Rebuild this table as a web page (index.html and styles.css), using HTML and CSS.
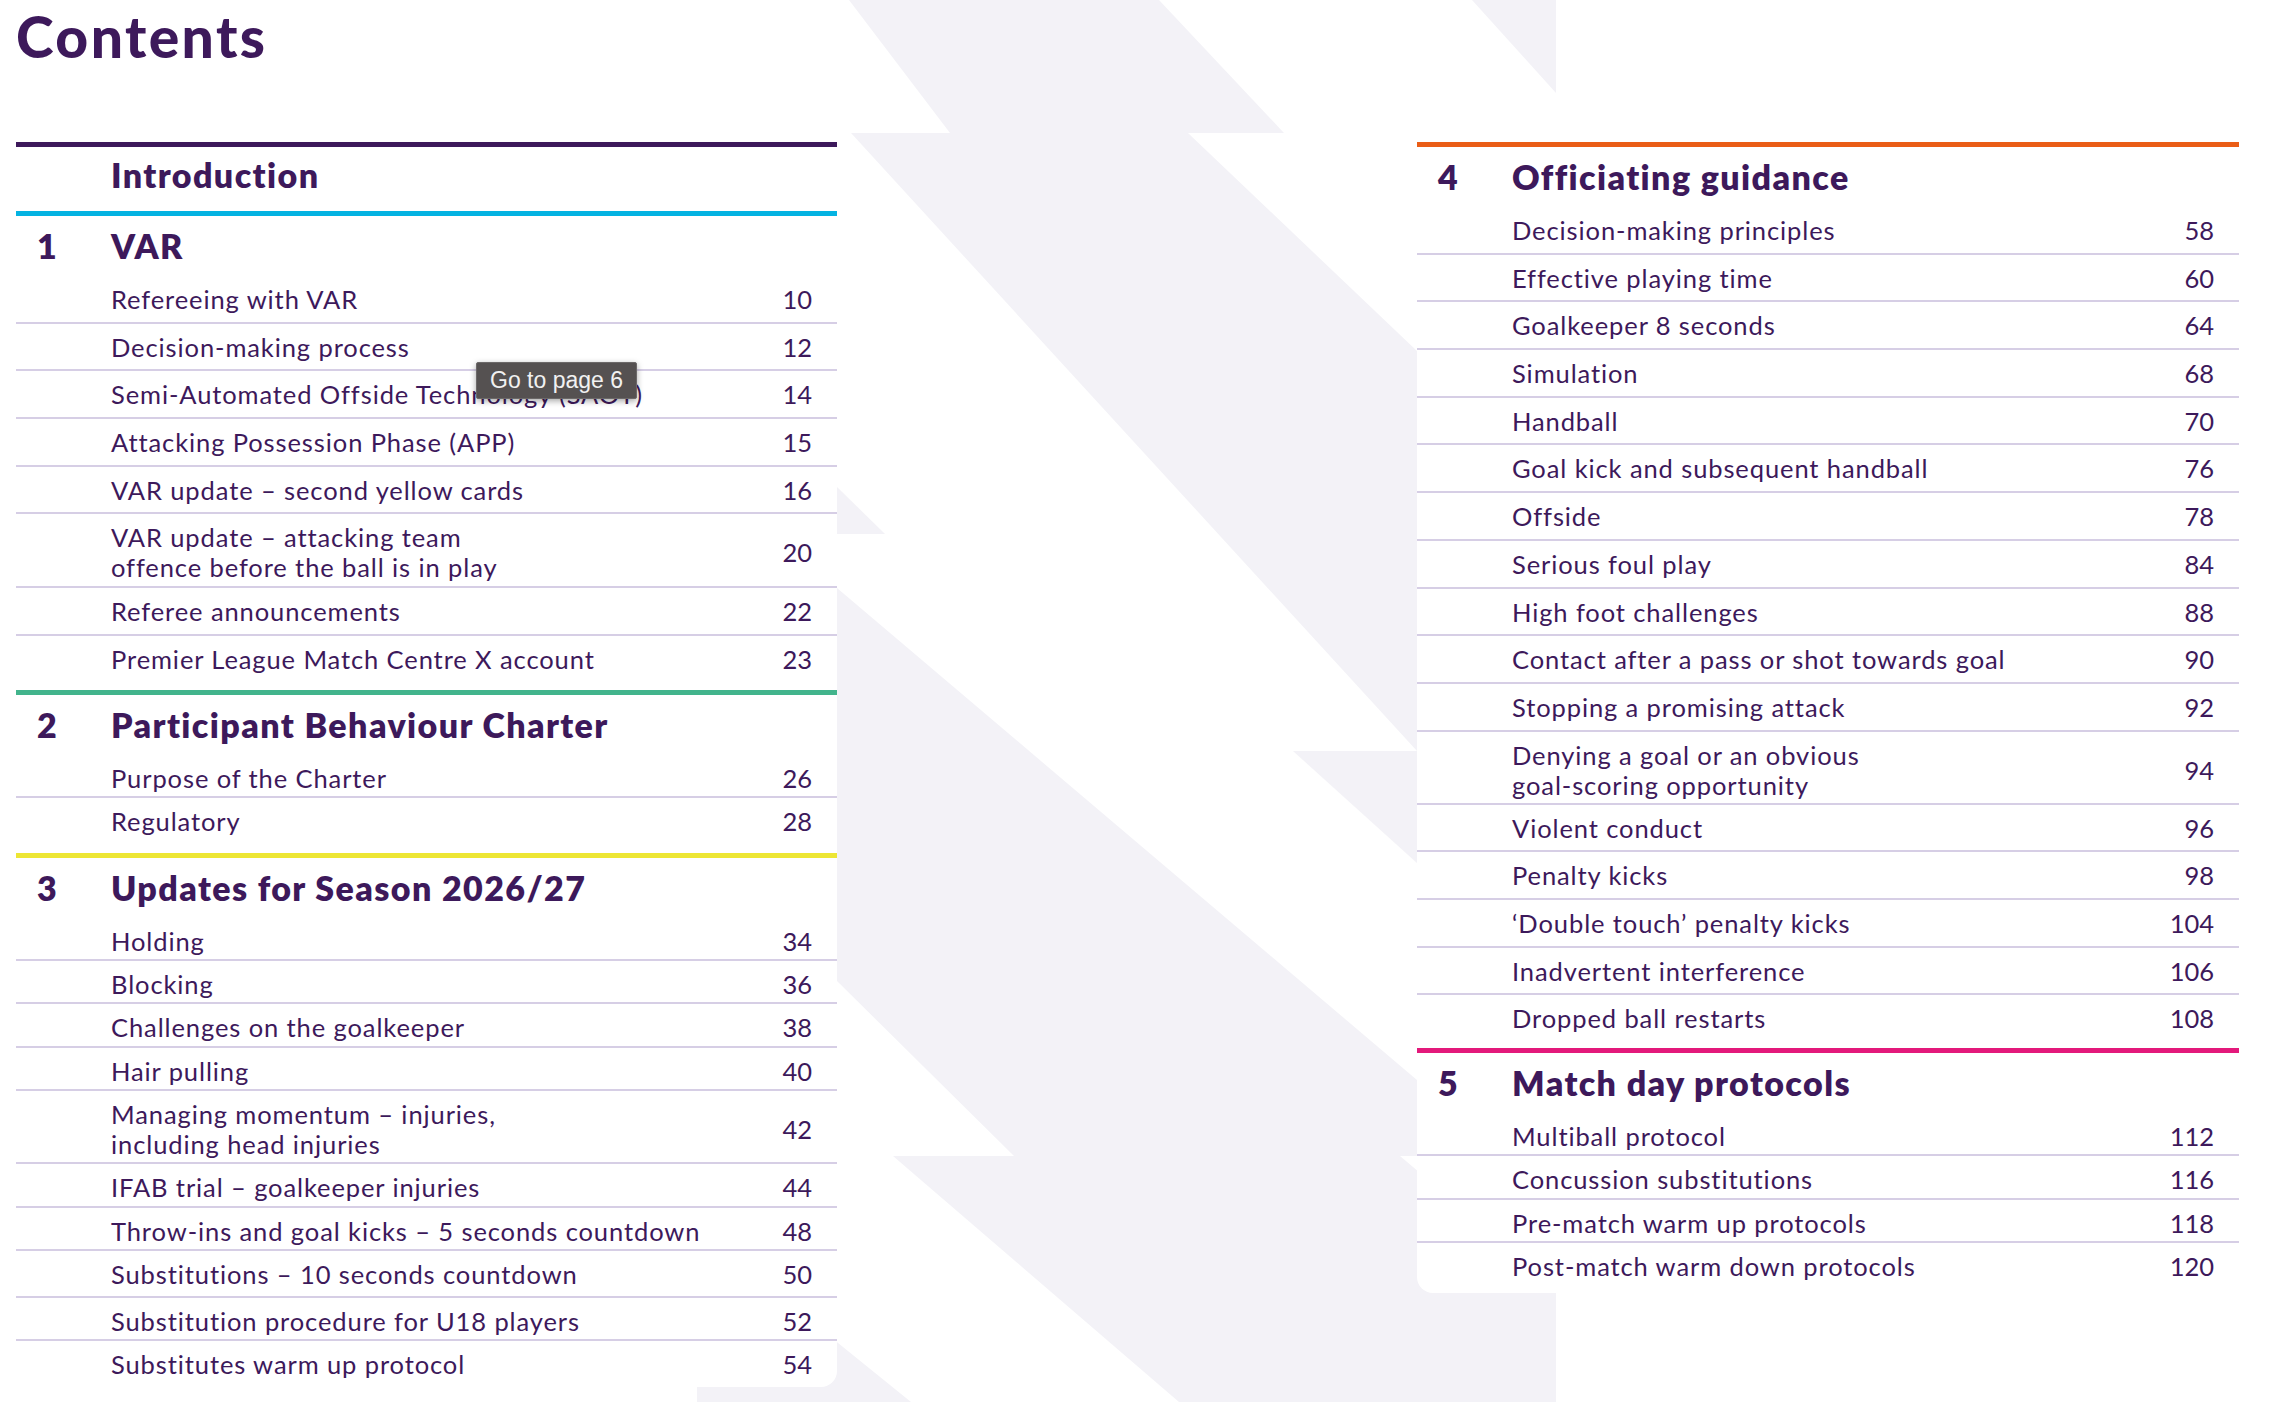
FILE: index.html
```html
<!DOCTYPE html>
<html lang="en">
<head>
<meta charset="utf-8">
<title>Contents</title>
<link rel="stylesheet" href="styles.css">
</head>
<body>
<div class="page">
  <svg class="backdrop" width="2276" height="1402" viewBox="0 0 2276 1402" aria-hidden="true">
    <g fill="#f3f2f7">
      <polygon points="849,0 1159,0 1284,133 950,133"/>
      <polygon points="851,133 1188,133 1417,351 1417,751"/>
      <polygon points="1293,751 1417,751 1417,863"/>
      <polygon points="837,487 885,534 837,534"/>
      <polygon points="837,588 1417,1080 1417,1156 1014,1156 837,981"/>
      <polygon points="893,1156 1400,1156 1556,1288 1556,1402 1179,1402"/>
      <polygon points="697,1229 911,1402 697,1402"/>
      <polygon points="1472,0 1556,0 1556,93"/>
    </g>
  </svg>

  <section class="card card-left">
    <h1 class="title">Contents</h1>
    <div class="toc">
      <div class="intro rule-purple"><span class="intro-title">Introduction</span></div>

      <div class="section rule-cyan end-1">
        <div class="sec-head"><span class="sec-num">1</span><span class="sec-title">VAR</span></div>
        <ul class="rows rows-lg">
          <li class="row"><span class="row-text">Refereeing with VAR</span><span class="row-page">10</span></li>
          <li class="row"><span class="row-text">Decision-making process</span><span class="row-page">12</span></li>
          <li class="row"><span class="row-text">Semi-Automated Offside Technology (SAOT)</span><span class="row-page">14</span></li>
          <li class="row"><span class="row-text">Attacking Possession Phase (APP)</span><span class="row-page">15</span></li>
          <li class="row"><span class="row-text">VAR update – second yellow cards</span><span class="row-page">16</span></li>
          <li class="row row-2 row-2-lg"><span class="row-text">VAR update – attacking team<br>offence before the ball is in play</span><span class="row-page">20</span></li>
          <li class="row"><span class="row-text">Referee announcements</span><span class="row-page">22</span></li>
          <li class="row"><span class="row-text">Premier League Match Centre X account</span><span class="row-page">23</span></li>
        </ul>
      </div>

      <div class="section rule-green end-2">
        <div class="sec-head"><span class="sec-num">2</span><span class="sec-title">Participant Behaviour Charter</span></div>
        <ul class="rows rows-sm">
          <li class="row"><span class="row-text">Purpose of the Charter</span><span class="row-page">26</span></li>
          <li class="row"><span class="row-text">Regulatory</span><span class="row-page">28</span></li>
        </ul>
      </div>

      <div class="section rule-yellow end-3">
        <div class="sec-head"><span class="sec-num">3</span><span class="sec-title">Updates for Season 2026/27</span></div>
        <ul class="rows rows-sm">
          <li class="row"><span class="row-text">Holding</span><span class="row-page">34</span></li>
          <li class="row"><span class="row-text">Blocking</span><span class="row-page">36</span></li>
          <li class="row"><span class="row-text">Challenges on the goalkeeper</span><span class="row-page">38</span></li>
          <li class="row"><span class="row-text">Hair pulling</span><span class="row-page">40</span></li>
          <li class="row row-2"><span class="row-text">Managing momentum – injuries,<br>including head injuries</span><span class="row-page">42</span></li>
          <li class="row"><span class="row-text">IFAB trial – goalkeeper injuries</span><span class="row-page">44</span></li>
          <li class="row"><span class="row-text">Throw-ins and goal kicks – 5 seconds countdown</span><span class="row-page">48</span></li>
          <li class="row row-gap"><span class="row-text">Substitutions – 10 seconds countdown</span><span class="row-page">50</span></li>
          <li class="row"><span class="row-text">Substitution procedure for U18 players</span><span class="row-page">52</span></li>
          <li class="row"><span class="row-text">Substitutes warm up protocol</span><span class="row-page">54</span></li>
        </ul>
      </div>
    </div>
    <div class="tooltip">Go to page 6</div>
  </section>

  <section class="card card-right">
    <div class="toc">
      <div class="section rule-orange end-4">
        <div class="sec-head"><span class="sec-num">4</span><span class="sec-title">Officiating guidance</span></div>
        <ul class="rows rows-lg">
          <li class="row"><span class="row-text">Decision-making principles</span><span class="row-page">58</span></li>
          <li class="row"><span class="row-text">Effective playing time</span><span class="row-page">60</span></li>
          <li class="row"><span class="row-text">Goalkeeper 8 seconds</span><span class="row-page">64</span></li>
          <li class="row"><span class="row-text">Simulation</span><span class="row-page">68</span></li>
          <li class="row"><span class="row-text">Handball</span><span class="row-page">70</span></li>
          <li class="row"><span class="row-text">Goal kick and subsequent handball</span><span class="row-page">76</span></li>
          <li class="row"><span class="row-text">Offside</span><span class="row-page">78</span></li>
          <li class="row"><span class="row-text">Serious foul play</span><span class="row-page">84</span></li>
          <li class="row"><span class="row-text">High foot challenges</span><span class="row-page">88</span></li>
          <li class="row"><span class="row-text">Contact after a pass or shot towards goal</span><span class="row-page">90</span></li>
          <li class="row"><span class="row-text">Stopping a promising attack</span><span class="row-page">92</span></li>
          <li class="row row-2"><span class="row-text">Denying a goal or an obvious<br>goal-scoring opportunity</span><span class="row-page">94</span></li>
          <li class="row"><span class="row-text">Violent conduct</span><span class="row-page">96</span></li>
          <li class="row"><span class="row-text">Penalty kicks</span><span class="row-page">98</span></li>
          <li class="row"><span class="row-text">‘Double touch’ penalty kicks</span><span class="row-page">104</span></li>
          <li class="row"><span class="row-text">Inadvertent interference</span><span class="row-page">106</span></li>
          <li class="row"><span class="row-text">Dropped ball restarts</span><span class="row-page">108</span></li>
        </ul>
      </div>

      <div class="section rule-pink end-5">
        <div class="sec-head"><span class="sec-num">5</span><span class="sec-title">Match day protocols</span></div>
        <ul class="rows rows-sm">
          <li class="row"><span class="row-text">Multiball protocol</span><span class="row-page">112</span></li>
          <li class="row"><span class="row-text">Concussion substitutions</span><span class="row-page">116</span></li>
          <li class="row"><span class="row-text">Pre-match warm up protocols</span><span class="row-page">118</span></li>
          <li class="row"><span class="row-text">Post-match warm down protocols</span><span class="row-page">120</span></li>
        </ul>
      </div>
    </div>
  </section>
</div>
</body>
</html>
```

FILE: styles.css
```css
* { box-sizing: border-box; }

html, body {
  margin: 0;
  padding: 0;
  background: #ffffff;
}

body {
  font-family: "Lato", "Liberation Sans", sans-serif;
  color: #3d195b;
}

.page {
  position: relative;
  width: 2276px;
  height: 1402px;
  overflow: hidden;
  display: flex;
  align-items: flex-start;
  justify-content: space-between;
}

.backdrop {
  position: absolute;
  left: 0;
  top: 0;
  z-index: 0;
}

.card {
  position: relative;
  z-index: 1;
  background: #ffffff;
}

.card-left {
  width: 837px;
  padding-left: 16px;
  border-bottom-right-radius: 16px;
}

.card-right {
  width: 859px;
  margin-top: 100px;
  padding-top: 42px;
  padding-right: 37px;
  border-bottom-left-radius: 16px;
}

.title {
  margin: 8px 0 78px 0;
  font-size: 57px;
  line-height: 56px;
  font-weight: 900;
  letter-spacing: 2.4px;
}

.toc {
  width: 100%;
}

/* coloured section rules */
.rule-purple { border-top: 5px solid #3d195b; }
.rule-cyan { border-top: 5px solid #04b3e2; }
.rule-green { border-top: 5px solid #42b48c; }
.rule-yellow { border-top: 5px solid #ede634; }
.rule-orange { border-top: 5px solid #ea5d16; }
.rule-pink { border-top: 5px solid #e3197b; }

.intro {
  height: 69px;
  padding: 8px 0 0 95px;
}

.intro-title,
.sec-title,
.sec-num {
  font-size: 34px;
  line-height: 40px;
  font-weight: 800;
}

.intro-title,
.sec-title {
  letter-spacing: 1.4px;
}

.sec-head {
  display: flex;
  height: 60px;
  padding-top: 10px;
  padding-left: 21px;
}

.sec-num {
  width: 74px;
}

.rows {
  list-style: none;
  margin: 0;
  padding: 0;
}

.row {
  display: flex;
  align-items: flex-start;
  padding: 8px 25px 0 95px;
  border-bottom: 2px solid #d6cee5;
  font-size: 25.5px;
  line-height: 30px;
}

.rows-lg .row { height: 47.7px; }
.rows-sm .row { height: 43.4px; }

.rows .row-2 {
  height: auto;
  align-items: center;
  padding-bottom: 3px;
}
.rows .row-2-lg { padding-bottom: 4px; }

.rows .row-gap { height: 47px; }

.rows .row:last-child { border-bottom: none; }

.row-text {
  flex: 1;
  letter-spacing: 0.9px;
}

.row-page {
  margin-left: 20px;
  text-align: right;
}

.end-1 { padding-bottom: 6px; }
.end-2 { padding-bottom: 11px; }
.end-3 { padding-bottom: 2px; }
.end-4 { padding-bottom: 5px; }
.end-5 { padding-bottom: 6px; }

.tooltip {
  position: absolute;
  left: 476px;
  top: 362px;
  height: 37px;
  padding: 0 13px;
  background: #555151;
  border: 1px solid #6c6969;
  border-radius: 2px;
  box-shadow: 0 2px 6px rgba(0, 0, 0, 0.35);
  color: #f1f1f1;
  font-family: "Liberation Sans", Arial, sans-serif;
  font-size: 23px;
  line-height: 35px;
  white-space: nowrap;
}
```
